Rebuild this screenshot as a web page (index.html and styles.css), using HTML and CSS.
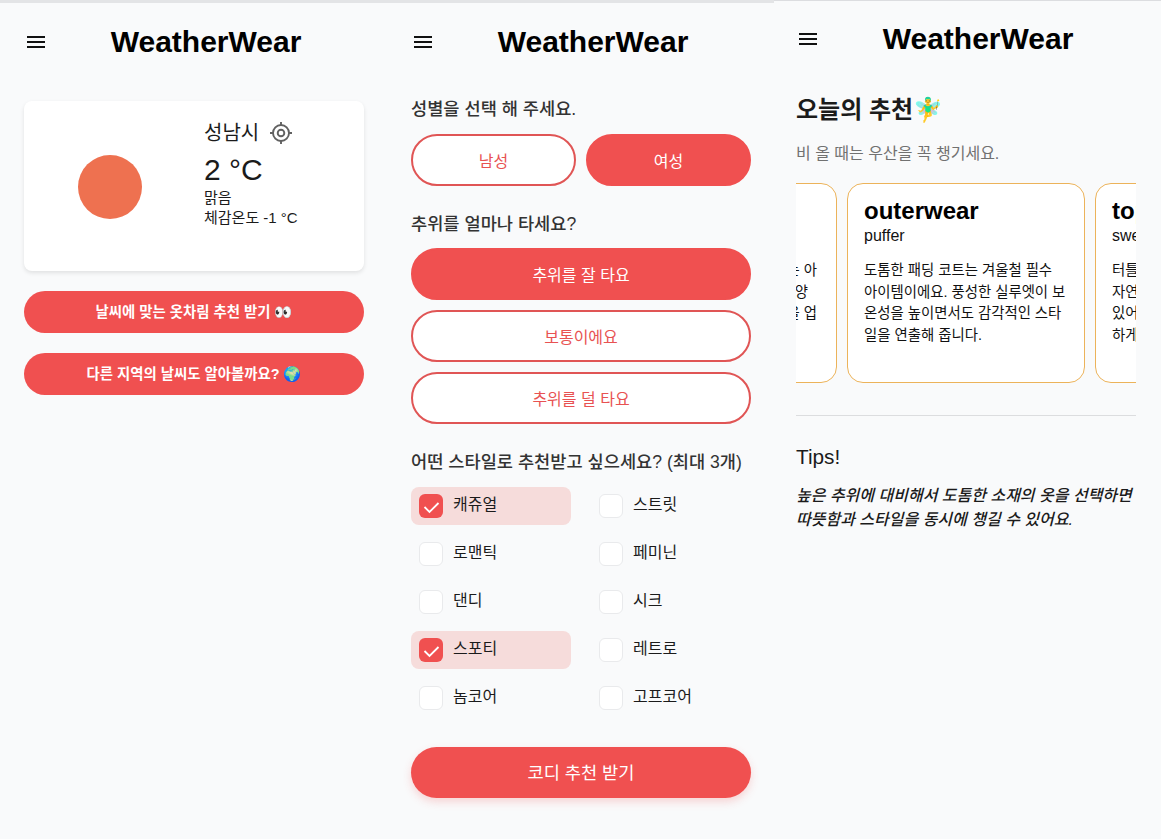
FILE: index.html
```
<!DOCTYPE html>
<html lang="ko">
<head>
<meta charset="utf-8">
<title>WeatherWear</title>
<link rel="stylesheet" href="styles.css">
</head>
<body>
<main class="screens">
  <section class="screen">
    <header class="header">
      <svg class="menu" viewBox="0 0 24 24"><path d="M3 18h18v-2H3v2zm0-5h18v-2H3v2zm0-7v2h18V6H3z"/></svg>
      <h1 class="brand">WeatherWear</h1>
    </header>
    <div class="weather">
      <div class="weather-icon"><div class="sun"></div></div>
      <div class="weather-info">
        <div class="city">성남시
          <svg class="locate" viewBox="0 0 24 24" fill="none" stroke="#616161" stroke-width="1.9"><circle cx="12" cy="12" r="8"/><circle cx="12" cy="12" r="3.3"/><path d="M12 1v3M12 20v3M1 12h3M20 12h3"/></svg>
        </div>
        <div class="temp">2 °C</div>
        <div class="detail">맑음</div>
        <div class="detail">체감온도 -1 °C</div>
      </div>
    </div>
    <button class="link-btn">날씨에 맞는 옷차림 추천 받기 👀</button>
    <button class="link-btn">다른 지역의 날씨도 알아볼까요? 🌍</button>
  </section>

  <section class="screen">
    <header class="header">
      <svg class="menu" viewBox="0 0 24 24"><path d="M3 18h18v-2H3v2zm0-5h18v-2H3v2zm0-7v2h18V6H3z"/></svg>
      <h1 class="brand">WeatherWear</h1>
    </header>
    <h2 class="question first">성별을 선택 해 주세요.</h2>
    <div class="choices pair">
      <button class="choice">남성</button>
      <button class="choice on">여성</button>
    </div>
    <h2 class="question">추위를 얼마나 타세요?</h2>
    <div class="choices">
      <button class="choice on">추위를 잘 타요</button>
      <button class="choice">보통이에요</button>
      <button class="choice">추위를 덜 타요</button>
    </div>
    <h2 class="question">어떤 스타일로 추천받고 싶으세요? (최대 3개)</h2>
    <div class="styles">
      <label class="style on"><span class="box"><svg viewBox="0 0 24 24"><path d="M5.5 13l5 5L19.5 9"/></svg></span><span class="name">캐쥬얼</span></label>
      <label class="style"><span class="box"></span><span class="name">스트릿</span></label>
      <label class="style"><span class="box"></span><span class="name">로맨틱</span></label>
      <label class="style"><span class="box"></span><span class="name">페미닌</span></label>
      <label class="style"><span class="box"></span><span class="name">댄디</span></label>
      <label class="style"><span class="box"></span><span class="name">시크</span></label>
      <label class="style on"><span class="box"><svg viewBox="0 0 24 24"><path d="M5.5 13l5 5L19.5 9"/></svg></span><span class="name">스포티</span></label>
      <label class="style"><span class="box"></span><span class="name">레트로</span></label>
      <label class="style"><span class="box"></span><span class="name">놈코어</span></label>
      <label class="style"><span class="box"></span><span class="name">고프코어</span></label>
    </div>
    <button class="submit">코디 추천 받기</button>
  </section>

  <section class="screen result">
    <header class="header">
      <svg class="menu" viewBox="0 0 24 24"><path d="M3 18h18v-2H3v2zm0-5h18v-2H3v2zm0-7v2h18V6H3z"/></svg>
      <h1 class="brand">WeatherWear</h1>
    </header>
    <h2 class="today">오늘의 추천🧚‍♂️</h2>
    <p class="note">비 올 때는 우산을 꼭 챙기세요.</p>
    <div class="carousel">
      <article class="item tail">
        <p class="desc">는 아</p>
        <p class="desc short">양</p>
        <p class="desc">을 업</p>
      </article>
      <article class="item">
        <h3 class="kind">outerwear</h3>
        <p class="piece">puffer</p>
        <p class="desc">도톰한 패딩 코트는 겨울철 필수<br>아이템이에요. 풍성한 실루엣이 보<br>온성을 높이면서도 감각적인 스타<br>일을 연출해 줍니다.</p>
      </article>
      <article class="item">
        <h3 class="kind">top</h3>
        <p class="piece">sweater</p>
        <p class="desc">터틀<br>자연<br>있어<br>하게</p>
      </article>
    </div>
    <hr class="rule">
    <h2 class="tips">Tips!</h2>
    <p class="tip">높은 추위에 대비해서 도톰한 소재의 옷을 선택하면 따뜻함과 스타일을 동시에 챙길 수 있어요.</p>
  </section>
</main>
</body>
</html>
```
FILE: styles.css
```
* { box-sizing: border-box; margin: 0; padding: 0; }
body {
  background: #f9fafb;
  color: #1b1b1b;
  font-family: "Liberation Sans", "Noto Sans CJK KR", "Noto Color Emoji", sans-serif;
  overflow: hidden;
}
button { font-family: inherit; border: 0; display: block; width: 100%; }

.screens { display: grid; grid-template-columns: repeat(3, 387px); height: 839px; }
.screen { padding: 0 23px 0 24px; border-top: 3px solid #e3e4e6; }
.screen.result { padding: 0 25px 0 22px; border-top: 1px solid #dcdde0; }

.header { display: flex; align-items: center; height: 78px; }
.result .header { height: 76px; }
.menu { width: 24px; height: 24px; fill: #111; flex: none; }
.brand { flex: 1; text-align: center; font-size: 30px; line-height: 36px; color: #000; }

.weather {
  display: flex; height: 170px; margin: 20px 0;
  background: #fff; border-radius: 8px;
  box-shadow: 0 2px 4px rgba(0, 0, 0, .1);
}
.weather-icon { width: 172px; padding-top: 2px; display: flex; align-items: center; justify-content: center; }
.sun { width: 64px; height: 64px; border-radius: 50%; background: #ee7150; }
.weather-info { padding: 20px 0 0 8px; }
.city { display: flex; align-items: center; gap: 9.5px; font-size: 20px; line-height: 24px; }
.locate { width: 24px; height: 24px; }
.temp { font-size: 30px; line-height: 36px; margin: 7px 0 0; }
.detail { font-size: 15px; line-height: 20px; }

.link-btn {
  height: 42px; margin-bottom: 20px; border-radius: 21px;
  background: #f05050; color: #fff; font-size: 14.4px; font-weight: 700; line-height: 20px;
}

.question { font-size: 17.6px; font-weight: 500; line-height: 26px; color: #333; margin: 25px 0 11px; }
.question.first { margin-top: 15px; margin-bottom: 12px; }
.choices { display: grid; gap: 10px; }
.choices.pair { grid-template-columns: 1fr 1fr; }
.choice {
  height: 52px; border: 2px solid #e05555; border-radius: 26px;
  background: #fff; color: #e85252; font-size: 16px;
}
.choice.on { background: #f05050; border-color: #f05050; color: #fff; }

.styles { display: grid; grid-template-columns: 160px 160px; gap: 10px 20px; margin-top: 12px; }
.style { display: flex; height: 38px; padding: 7px 8px 0; border-radius: 8px; gap: 10px; }
.style.on { background: #f6dcdb; }
.box { width: 24px; height: 24px; border: 1px solid #e9eaec; border-radius: 6px; background: #fff; }
.style.on .box { border: 0; background: #f05050; }
.box svg { display: block; width: 24px; height: 24px; fill: none; stroke: #fff; stroke-width: 1.8; }
.name { font-size: 16px; line-height: 22px; }

.submit {
  height: 51px; margin-top: 30px; padding-bottom: 2px; border-radius: 26px;
  background: #f05050; color: #fff; font-size: 17.6px;
  box-shadow: 0 4px 8px rgba(240, 80, 80, .22);
}

.today { font-size: 24px; line-height: 32px; margin-top: 17px; }
.note { font-size: 16px; line-height: 24px; color: #717171; margin-top: 16px; }
.carousel { display: flex; justify-content: center; gap: 10px; margin-top: 17px; overflow: hidden; }
.item {
  flex: none; width: 238px; height: 200px; padding: 12px 16px;
  border: 1px solid #ecb35a; border-radius: 16px; background: #fff; color: #111;
}
.kind { font-size: 24px; line-height: 30px; color: #000; }
.piece { font-size: 16px; line-height: 20px; margin-bottom: 14px; }
.desc { font-size: 14.4px; line-height: 21.6px; }
.tail { display: flex; flex-direction: column; align-items: flex-end; padding: 76px 19px 0; }
.short { margin-right: 9px; }
.rule { border: 0; border-top: 1px solid #dcdddf; margin: 32px 0 29px; }
.tips { font-size: 20.8px; font-weight: 400; line-height: 24px; }
.tip { font-size: 16px; font-weight: 500; font-style: italic; line-height: 24px; margin-top: 15px; word-break: keep-all; }
```
